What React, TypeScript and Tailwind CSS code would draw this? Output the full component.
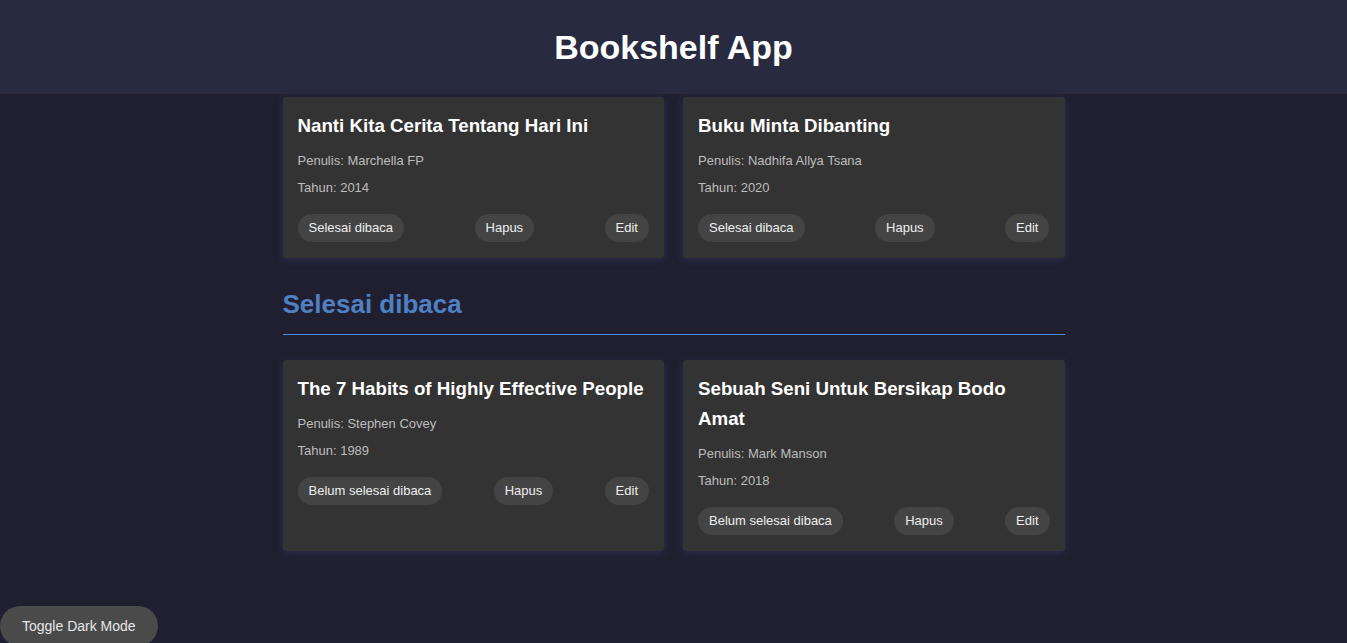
import React from "react";

type Book = { title: string; author: string; year: number };

const unread: Book[] = [
  { title: "Nanti Kita Cerita Tentang Hari Ini", author: "Marchella FP", year: 2014 },
  { title: "Buku Minta Dibanting", author: "Nadhifa Allya Tsana", year: 2020 },
];

const done: Book[] = [
  { title: "The 7 Habits of Highly Effective People", author: "Stephen Covey", year: 1989 },
  { title: "Sebuah Seni Untuk Bersikap Bodo Amat", author: "Mark Manson", year: 2018 },
];

function Pill({ children }: { children: React.ReactNode }) {
  return (
    <button className="h-[28px] px-[11px] rounded-full bg-[#444444] text-[13px] text-[#eeeeee] [font-family:Liberation_Sans,Arial,sans-serif]">
      {children}
    </button>
  );
}

function BookCard({ book, finished }: { book: Book; finished: boolean }) {
  return (
    <div className="bg-[#333333] px-[15px] pt-[14px] pb-[16px] rounded-[3px] shadow-[0_2px_8px_rgba(70,70,130,0.4)]">
      <h3 className="text-[18.72px] leading-[30px] font-bold text-white">{book.title}</h3>
      <p className="mt-[12px] text-[13px] leading-[15px] text-[#bdbdbd]">Penulis: {book.author}</p>
      <p className="mt-[12px] text-[13px] leading-[15px] text-[#bdbdbd]">Tahun: {book.year}</p>
      <div className="mt-[19px] flex items-center justify-between">
        <Pill>{finished ? "Belum selesai dibaca" : "Selesai dibaca"}</Pill>
        <Pill>Hapus</Pill>
        <Pill>Edit</Pill>
      </div>
    </div>
  );
}

export default function App() {
  return (
    <div className="min-h-screen bg-[#1f1f2f] [font-family:Liberation_Sans,Arial,sans-serif]">
      <header className="h-[94px] bg-[#282a3f] flex items-center justify-center">
        <h1 className="text-[34px] font-bold text-white">Bookshelf App</h1>
      </header>

      <main className="w-[782px] mx-auto pt-[3px] pb-[60px]">
        <div className="grid grid-cols-2 gap-[19px]">
          {unread.map((b) => (
            <BookCard key={b.title} book={b} finished={false} />
          ))}
        </div>

        <h2 className="mt-[31px] pb-[15px] text-[26px] leading-[30px] font-bold text-[#4f80c4] border-b border-solid border-b-[#4a90e2]">
          Selesai dibaca
        </h2>

        <div className="mt-[25px] grid grid-cols-2 gap-[19px]">
          {done.map((b) => (
            <BookCard key={b.title} book={b} finished={true} />
          ))}
        </div>
      </main>

      <button className="fixed left-0 bottom-[-3px] h-[40px] px-[22px] rounded-full bg-[#4a4a4a] text-[14px] text-[#e6e6e6] [font-family:Liberation_Sans,Arial,sans-serif]">
        Toggle Dark Mode
      </button>
    </div>
  );
}
